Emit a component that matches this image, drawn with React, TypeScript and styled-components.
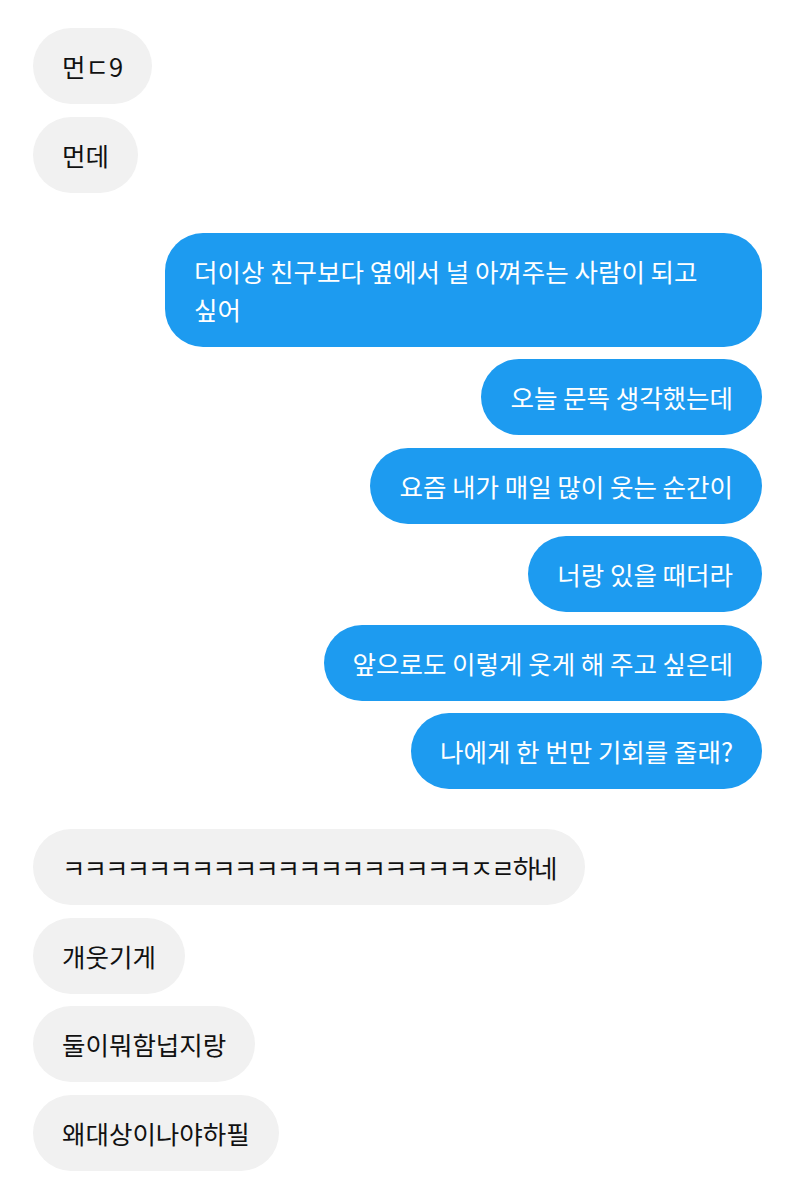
import React from "react";
import styled, { createGlobalStyle } from "styled-components";

const GlobalStyle = createGlobalStyle`
  html, body {
    margin: 0;
    padding: 0;
    background: #ffffff;
  }
  body {
    font-family: "Noto Sans CJK KR", "Noto Sans", sans-serif;
  }
`;

const Thread = styled.div`
  display: flex;
  flex-direction: column;
  gap: 40px;
  padding: 28px 34px 30px 33px;
`;

const Group = styled.div<{ $mine?: boolean }>`
  display: flex;
  flex-direction: column;
  align-items: ${({ $mine }) => ($mine ? "flex-end" : "flex-start")};
  gap: 12.5px;
`;

const Bubble = styled.div<{ $mine?: boolean; $tight?: boolean }>`
  max-width: 597px;
  box-sizing: border-box;
  padding: 19px 29px;
  border-radius: 38px;
  font-size: 25.5px;
  line-height: 38px;
  letter-spacing: ${({ $tight }) => ($tight ? "-2px" : "0")};
  background: ${({ $mine }) => ($mine ? "#1d9bf0" : "#f1f1f1")};
  color: ${({ $mine }) => ($mine ? "#ffffff" : "#111111")};
  word-break: keep-all;
`;

const theirsTop = ["먼ㄷ9", "먼데"];

const mine = [
  "더이상 친구보다 옆에서 널 아껴주는 사람이 되고 싶어",
  "오늘 문뜩 생각했는데",
  "요즘 내가 매일 많이 웃는 순간이",
  "너랑 있을 때더라",
  "앞으로도 이렇게 웃게 해 주고 싶은데",
  "나에게 한 번만 기회를 줄래?",
];

const theirsBottom = [
  "ㅋㅋㅋㅋㅋㅋㅋㅋㅋㅋㅋㅋㅋㅋㅋㅋㅋㅋㅋㅈㄹ하네",
  "개웃기게",
  "둘이뭐함넙지랑",
  "왜대상이나야하필",
];

export default function App() {
  return (
    <>
      <GlobalStyle />
      <Thread>
        <Group>
          {theirsTop.map((t) => (
            <Bubble key={t}>{t}</Bubble>
          ))}
        </Group>
        <Group $mine>
          {mine.map((t) => (
            <Bubble $mine key={t}>
              {t}
            </Bubble>
          ))}
        </Group>
        <Group>
          {theirsBottom.map((t) => (
            <Bubble key={t} $tight={t.startsWith("ㅋ")}>
              {t}
            </Bubble>
          ))}
        </Group>
      </Thread>
    </>
  );
}
